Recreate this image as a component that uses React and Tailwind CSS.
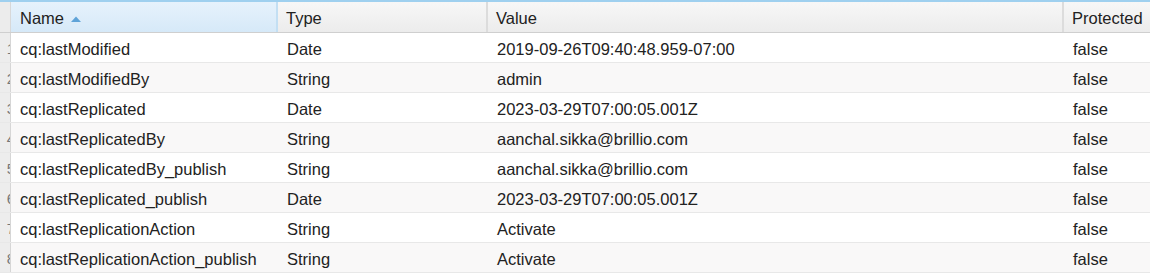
import React from "react";

const rows = [
  ["cq:lastModified", "Date", "2019-09-26T09:40:48.959-07:00", "false"],
  ["cq:lastModifiedBy", "String", "admin", "false"],
  ["cq:lastReplicated", "Date", "2023-03-29T07:00:05.001Z", "false"],
  ["cq:lastReplicatedBy", "String", "aanchal.sikka@brillio.com", "false"],
  ["cq:lastReplicatedBy_publish", "String", "aanchal.sikka@brillio.com", "false"],
  ["cq:lastReplicated_publish", "Date", "2023-03-29T07:00:05.001Z", "false"],
  ["cq:lastReplicationAction", "String", "Activate", "false"],
  ["cq:lastReplicationAction_publish", "String", "Activate", "false"],
];

const cols = "grid grid-cols-[11px_267px_210px_576px_86px]";

export default function App() {
  return (
    <div
      className="w-[1150px] h-[274px] overflow-hidden bg-white text-[16.5px] text-[#222]"
      style={{ fontFamily: '"Liberation Sans", Arial, sans-serif' }}
    >
      <div className="h-[2px] bg-[#9fd0ef]" />
      <div className={`${cols} h-[31px] border-b border-[#cfcfcf] bg-gradient-to-b from-[#f7f7f7] to-[#ececec]`}>
        <div className="border-r border-[#d8d8d8] bg-[#ececec]" />
        <div className="flex items-center pl-[9px] pt-[2px] bg-gradient-to-b from-[#e6f2fc] to-[#d6e9f8] border-r-2 border-[#c3dff3]">
          <span>Name</span>
          <svg width="12" height="8" viewBox="0 0 12 8" className="ml-[6px] mt-[1px]">
            <path d="M1 7 L6 1.5 L11 7 Z" fill="#5ea3d8" />
          </svg>
        </div>
        <div className="flex items-center pl-[8px] pt-[2px] border-r-2 border-[#dcdcdc]">Type</div>
        <div className="flex items-center pl-[8px] pt-[2px] border-r-2 border-[#dcdcdc]">Value</div>
        <div className="flex items-center pl-[8px] pt-[2px]">Protected</div>
      </div>
      {rows.map((r, i) => (
        <div
          key={i}
          className={`${cols} h-[30px] border-b border-[#e8e8e8] ${i % 2 === 1 ? "bg-[#f9f8f8]" : "bg-white"}`}
        >
          <div className="overflow-hidden border-r border-[#d6d6d6] bg-[#ededed] flex items-center justify-end pt-[3px]">
            <span className="mr-[-5px] text-[#777] text-[15px]">{i + 1}</span>
          </div>
          <div className="flex items-center pl-[9px] pt-[3px] whitespace-nowrap">{r[0]}</div>
          <div className="flex items-center pl-[9px] pt-[3px]">{r[1]}</div>
          <div className="flex items-center pl-[9px] pt-[3px]">{r[2]}</div>
          <div className="flex items-center pl-[9px] pt-[3px]">{r[3]}</div>
        </div>
      ))}
    </div>
  );
}
